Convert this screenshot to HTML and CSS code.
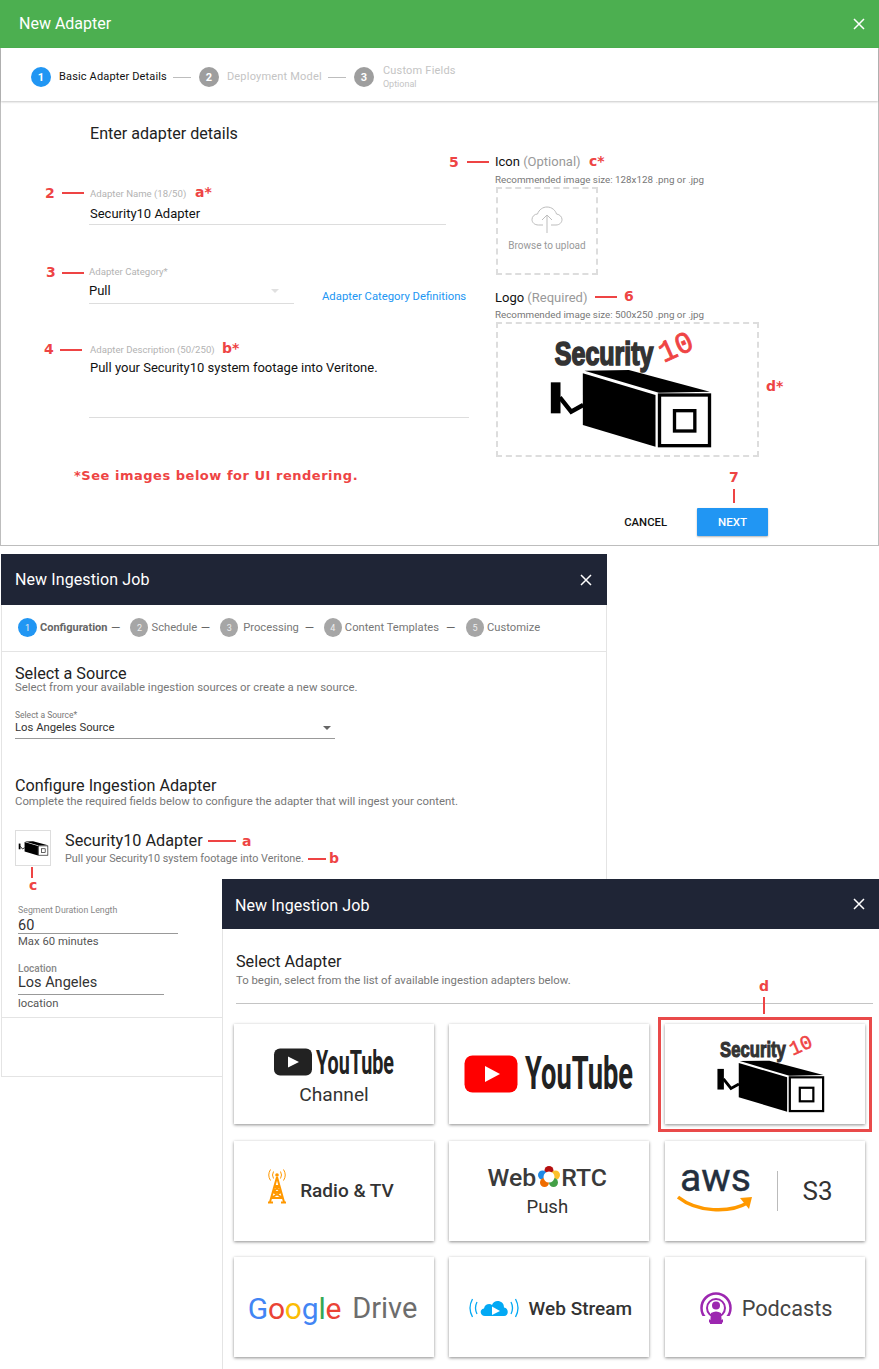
FILE: index.html
```html
<!DOCTYPE html>
<html lang="en">
<head>
<meta charset="utf-8">
<title>Adapter wizard</title>
<link rel="stylesheet" href="styles.css">
</head>
<body>
<svg class="defs" width="0" height="0" aria-hidden="true">
  <symbol id="cam" viewBox="325 685 495 245">
    <rect x="331" y="727" width="29" height="93" fill="#000"/>
    <path d="M358 772 L392 815 L428 795" fill="none" stroke="#000" stroke-width="13"/>
    <path d="M432 692 L565 690 L808 755 L655 758 Z" fill="#000"/>
    <path d="M427 700 L645 765 L645 920 L427 855 Z" fill="#000"/>
    <rect x="657" y="765" width="150" height="152" fill="#fff" stroke="#000" stroke-width="10"/>
    <rect x="702" y="812" width="61" height="61" fill="#fff" stroke="#000" stroke-width="10"/>
  </symbol>
</svg>

<section class="panel p1">
  <header class="bar bar-green">
    <span class="bar-title">New Adapter</span>
    <svg class="x" viewBox="0 0 12 12"><path d="M1 1 L11 11 M11 1 L1 11"/></svg>
  </header>
  <div class="p1-frame">
    <nav class="steps1">
      <span class="dot dot-on">1</span><span class="s1-label s1-active">Basic Adapter Details</span><span class="s1-line"></span>
      <span class="dot">2</span><span class="s1-label">Deployment Model</span><span class="s1-line"></span>
      <span class="dot">3</span><span class="s1-stack"><span class="s1-label s1-flat">Custom Fields</span><small>Optional</small></span>
    </nav>
    <div class="p1-main">
      <div class="p1-left">
        <h2 class="p1-head">Enter adapter details</h2>
        <div class="f-label f1">Adapter Name (18/50)</div>
        <div class="f-value fv1">Security10 Adapter</div>
        <div class="f-label f2">Adapter Category*</div>
        <div class="cat-row">
          <div class="f-value fv2"><span>Pull</span><i class="caret caret-light"></i></div>
          <a class="cat-link">Adapter Category Definitions</a>
        </div>
        <div class="f-label f3">Adapter Description (50/250)</div>
        <div class="f-value fv3">Pull your Security10 system footage into Veritone.</div>
      </div>
      <div class="p1-right">
        <div class="up-title">Icon <span>(Optional)</span></div>
        <div class="up-hint">Recommended image size: 128x128 .png or .jpg</div>
        <div class="drop drop-icon">
          <svg class="cloud" viewBox="0 0 32 27"><path d="M12 19 H7.5 C3.5 19 1 16.5 1 13.5 C1 10.5 3.5 8 6.5 8 C8 3.5 12 1 16 1 C21 1 24.5 4.5 25.5 8 C29 8.5 31 11 31 13.5 C31 16.5 28.5 19 25 19 H20 M16 27 V9 M11 14 L16 9 L21 14"/></svg>
          <span>Browse to upload</span>
        </div>
        <div class="up-title up-logo">Logo <span>(Required)</span></div>
        <div class="up-hint up-hint2">Recommended image size: 500x250 .png or .jpg</div>
        <div class="drop drop-logo">
          <svg class="sec-big" viewBox="320 570 500 360">
            <text x="343" y="675" class="sec-word" textLength="296" lengthAdjust="spacingAndGlyphs">Security</text>
            <text x="0" y="0" class="sec-ten" transform="translate(670 668) rotate(-24)" textLength="104" lengthAdjust="spacingAndGlyphs">10</text>
            <use href="#cam" x="325" y="685" width="495" height="245"/>
          </svg>
        </div>
      </div>
    </div>
    <div class="p1-actions">
      <span class="cancel">CANCEL</span>
      <span class="next">NEXT</span>
    </div>
  </div>
</section>

<section class="panel p2">
  <header class="bar bar-dark bar-p2">
    <span class="bar-title">New Ingestion Job</span>
    <svg class="x" viewBox="0 0 12 12"><path d="M1 1 L11 11 M11 1 L1 11"/></svg>
  </header>
  <div class="p2-frame">
    <nav class="steps2">
      <span class="dot2 dot2-on">1</span><b class="s2-label s2-strong">Configuration</b><span class="s2-dash">—</span>
      <span class="dot2">2</span><span class="s2-label">Schedule</span><span class="s2-dash">—</span>
      <span class="dot2">3</span><span class="s2-label s2-wide">Processing</span><span class="s2-dash s2-dash-far">—</span>
      <span class="dot2">4</span><span class="s2-label">Content Templates</span><span class="s2-dash s2-dash-last">—</span>
      <span class="dot2">5</span><span class="s2-label">Customize</span>
    </nav>
    <div class="p2-body">
      <h3 class="h3">Select a Source</h3>
      <p class="sub sub-tight">Select from your available ingestion sources or create a new source.</p>
      <div class="src-label">Select a Source*</div>
      <div class="src-value"><span>Los Angeles Source</span><i class="caret caret-dark"></i></div>
      <h3 class="h3 h3-conf">Configure Ingestion Adapter</h3>
      <p class="sub">Complete the required fields below to configure the adapter that will ingest your content.</p>
      <div class="ad-row">
        <div class="ad-icon"><svg class="cam-small"><use href="#cam"/></svg></div>
        <div>
          <div class="ad-name">Security10 Adapter</div>
          <div class="sub ad-sub">Pull your Security10 system footage into Veritone.</div>
        </div>
      </div>
      <div class="fields">
        <div class="fd-label">Segment Duration Length</div>
        <div class="fd-value fd-short">60</div>
        <div class="fd-help">Max 60 minutes</div>
        <div class="fd-label fd-loc">Location</div>
        <div class="fd-value fd-city">Los Angeles</div>
        <div class="fd-help fd-help2">location</div>
      </div>
    </div>
    <div class="p2-rule"></div>
  </div>
</section>

<section class="panel p3">
  <header class="bar bar-dark bar-p3">
    <span class="bar-title">New Ingestion Job</span>
    <svg class="x" viewBox="0 0 12 12"><path d="M1 1 L11 11 M11 1 L1 11"/></svg>
  </header>
  <div class="p3-body">
    <h3 class="h3">Select Adapter</h3>
    <p class="sub p3-sub">To begin, select from the list of available ingestion adapters below.</p>
    <hr class="p3-hr">
    <div class="cards">
      <div class="card card-col card-channel">
        <svg class="yt1" viewBox="0 0 122 28">
          <rect x="1" y="0.5" width="38" height="27" rx="6" fill="#222"/>
          <path d="M15 8.5 L26 14 L15 19.5 Z" fill="#fff"/>
          <text x="43" y="26" class="yt-word" textLength="78" lengthAdjust="spacingAndGlyphs">YouTube</text>
        </svg>
        <span class="card-text-channel">Channel</span>
      </div>
      <div class="card">
        <svg class="yt2" viewBox="0 0 170 38">
          <rect x="0.5" y="0.5" width="53" height="37" rx="8" fill="#f00"/>
          <path d="M21 11 L36 19 L21 27 Z" fill="#fff"/>
          <text x="61" y="34" class="yt-word yt-word2" textLength="108" lengthAdjust="spacingAndGlyphs">YouTube</text>
        </svg>
      </div>
      <div class="card">
        <svg class="sec-card" viewBox="320 570 500 360">
          <text x="343" y="675" class="sec-word" textLength="296" lengthAdjust="spacingAndGlyphs">Security</text>
          <text x="0" y="0" class="sec-ten" transform="translate(670 668) rotate(-24)" textLength="104" lengthAdjust="spacingAndGlyphs">10</text>
          <use href="#cam" x="325" y="685" width="495" height="245"/>
        </svg>
      </div>

      <div class="card card-radio">
        <svg class="tower" viewBox="0 0 20 36">
          <path d="M10 9 L3 34 M10 9 L17 34 M7.6 18 H12.4 M6 24 H14 M4 30 H16 M7.6 18 L14 24 M12.4 18 L6 24 M6 24 L16 30 M14 24 L4 30 M1 34.500 H6 M14 34.500 H19" fill="none" stroke="#ff9800" stroke-width="2"/>
          <circle cx="10" cy="7" r="1.800" fill="#ff9800"/>
          <path d="M6.500 3.500 Q4.500 7 6.500 10.500 M13.500 3.500 Q15.500 7 13.500 10.500 M3.500 1.500 Q0 7 3.500 12.500 M16.500 1.500 Q20 7 16.500 12.500" fill="none" stroke="#ff9800" stroke-width="1"/>
        </svg>
        <span class="card-text-radio">Radio &amp; TV</span>
      </div>
      <div class="card card-col card-webrtc">
        <div class="webrtc">
          <span>Web</span>
          <svg class="rtc-ring" viewBox="0 0 22 22">
            <circle cx="11" cy="4.500" r="4.500" fill="#b50f0f"/>
            <circle cx="4.500" cy="9" r="4.500" fill="#1e88e5"/>
            <circle cx="17.500" cy="9" r="4.500" fill="#fbc02d"/>
            <circle cx="6.500" cy="16.500" r="4.500" fill="#ef6c00"/>
            <circle cx="15.500" cy="16.500" r="4.500" fill="#43a047"/>
            <circle cx="11" cy="11" r="5.500" fill="#fff"/>
          </svg>
          <span>RTC</span>
        </div>
        <span class="card-text-push">Push</span>
      </div>
      <div class="card card-aws">
        <svg class="aws" viewBox="0 0 78 47">
          <text x="3" y="24" class="aws-word" textLength="71" lengthAdjust="spacingAndGlyphs">aws</text>
          <path d="M1 30 C20 45 52 47 72 35" fill="none" stroke="#f90" stroke-width="3.500"/>
          <path d="M63 31 L75 30 L72 42 Z" fill="#f90"/>
        </svg>
        <span class="aws-div"></span>
        <span class="card-text-s3">S3</span>
      </div>

      <div class="card card-low card-google">
        <span class="gd"><span class="g-b">G</span><span class="g-r">o</span><span class="g-y">o</span><span class="g-b">g</span><span class="g-g">l</span><span class="g-r">e</span></span><span class="gd-drive">Drive</span>
      </div>
      <div class="card card-low">
        <svg class="stream" viewBox="0 0 54 22">
          <path d="M10 17 Q7 11 10 5 M5.500 20 Q0.500 11 5.500 2 M44 17 Q47 11 44 5 M48.500 20 Q53.500 11 48.500 2" fill="none" stroke="#03a9f4" stroke-width="1.300"/>
          <path d="M18 19 C13 19 12 12 17 11.500 C17.500 7 23 6 25 8 C27 2 37 3 37 10.500 C42 11 42 19 37 19 Z" fill="#03a9f4"/>
          <path d="M25 9.500 L33 14 L25 18 Z" fill="#fff"/>
        </svg>
        <span class="card-text-stream">Web Stream</span>
      </div>
      <div class="card card-low card-podcasts">
        <svg class="pod" viewBox="0 0 32 32">
          <circle cx="16" cy="16" r="14.500" fill="none" stroke="#9c27b0" stroke-width="2.500"/>
          <circle cx="16" cy="16" r="9" fill="none" stroke="#9c27b0" stroke-width="2"/>
          <rect x="0" y="24" width="9" height="8" fill="#fff"/>
          <rect x="23" y="24" width="9" height="8" fill="#fff"/>
          <circle cx="16" cy="13.500" r="4" fill="#9c27b0"/>
          <path d="M10 32 L11 21 Q16 18 21 21 L22 32 Z" fill="#9c27b0"/>
        </svg>
        <span class="card-text-pod">Podcasts</span>
      </div>
    </div>
  </div>
</section>

<div class="red-box"></div>

<span class="n n-2">2</span><i class="dash d-2"></i><span class="n n-astar-a">a*</span>
<span class="n n-3">3</span><i class="dash d-3"></i>
<span class="n n-4">4</span><i class="dash d-4"></i><span class="n n-astar-b">b*</span>
<span class="n n-5">5</span><i class="dash d-5"></i><span class="n n-astar-c">c*</span>
<i class="dash d-6"></i><span class="n n-6">6</span>
<span class="n n-astar-d">d*</span>
<span class="n n-7">7</span><i class="vdash v-7"></i>
<div class="see-note">*See images below for UI rendering.</div>
<i class="dash d-a"></i><span class="n n-a">a</span>
<i class="dash d-b"></i><span class="n n-b">b</span>
<i class="vdash v-c"></i><span class="n n-c">c</span>
<span class="n n-d">d</span><i class="vdash v-d"></i>
</body>
</html>
```
FILE: styles.css
```css
* { box-sizing: border-box; }
html, body { margin: 0; padding: 0; background: #fff; }
body {
  position: relative;
  width: 879px;
  height: 1369px;
  overflow: hidden;
  font-family: Roboto, "Liberation Sans", sans-serif;
  color: #222;
}
.defs { position: absolute; }
.panel { position: absolute; background: #fff; display: flex; flex-direction: column; }
.p1 { left: 0; top: 0; width: 879px; height: 546px; }
.p2 { left: 1px; top: 554px; width: 606px; height: 523px; }
.p3 { left: 222px; top: 879px; width: 657px; height: 490px; }

.bar { display: flex; align-items: center; justify-content: space-between; color: #fff; flex: none; }
.bar-green { height: 48px; background: #4caf50; padding: 0 14px 0 19px; }
.bar-dark { background: #1f2536; }
.bar-dark .bar-title { letter-spacing: .1px; }
.bar-p2 { height: 51px; padding: 0 15px 0 14px; }
.bar-p3 { height: 50px; padding: 0 14px 0 13px; }
.bar-p3 .bar-title { margin-top: 4px; }
.bar-title { font-size: 16px; line-height: 20px; }
.x { width: 12px; height: 12px; fill: none; stroke: #fff; stroke-width: 1.500; }

/* panel 1 */
.p1-frame { flex: 1; display: flex; flex-direction: column; border: 1px solid #bdbdbd; border-top: 0; min-height: 0; }
.steps1 { height: 53px; flex: none; display: flex; align-items: center; padding: 5px 0 0 30px; box-shadow: 0 1px 2px rgba(0,0,0,.22); }
.dot { width: 20px; height: 20px; border-radius: 50%; background: #9e9e9e; color: #fff; font-size: 11px; font-weight: 700; display: flex; align-items: center; justify-content: center; flex: none; }
.dot-on { background: #2196f3; }
.s1-label { font-size: 11px; line-height: 14px; margin-left: 8px; color: #c4c4c4; white-space: nowrap; letter-spacing: .2px; }
.s1-active { color: #111; letter-spacing: .15px; }
.s1-line { width: 18px; height: 1px; background: #bdbdbd; margin: 0 8px 0 6px; flex: none; }
.s1-stack { display: flex; flex-direction: column; margin-left: 9px; margin-top: -1px; }
.s1-flat { margin-left: 0; }
.s1-stack small { font-size: 9px; line-height: 12px; color: #c4c4c4; }

.p1-main { flex: 1; display: flex; padding: 23px 0 0 88px; min-height: 0; }
.p1-left { width: 380px; flex: none; }
.p1-head { margin: 0 0 0 1px; font-size: 16.100px; line-height: 19px; font-weight: 400; color: #222; }
.f-label { font-size: 9.600px; line-height: 12px; color: #b3b3b3; }
.f1 { margin: 45px 0 0 1px; }
.f2 { margin-top: 41px; }
.f3 { margin: 39px 0 0 1px; }
.f-value { font-size: 13px; line-height: 16px; color: #111; }
.fv1 { margin-top: 6px; width: 357px; padding: 0 0 2px 1px; border-bottom: 1px solid #ddd; }
.cat-row { display: flex; align-items: flex-start; margin-top: 5px; }
.fv2 { width: 205px; height: 21px; display: flex; justify-content: space-between; align-items: center; padding: 0 15px 5px 0; border-bottom: 1px solid #ddd; flex: none; }
.cat-link { margin: 6px 0 0 28px; font-size: 11.300px; line-height: 16px; color: #2196f3; white-space: nowrap; }
.fv3 { margin-top: 4px; padding: 0 0 0 1px; height: 58px; border-bottom: 1px solid #ddd; width: 380px; font-size: 13px; }
.caret { display: block; width: 0; height: 0; border-left: 4.500px solid transparent; border-right: 4.500px solid transparent; }
.caret-light { border-top: 4.500px solid #e0e0e0; }
.caret-dark { border-top: 4.500px solid #666; }

.p1-right { margin: 29px 0 0 26px; flex: none; }
.up-title { font-size: 13px; height: 16px; line-height: 18px; color: #111; }
.up-title span { color: #999; }
.up-logo { margin-top: 14px; }
.up-hint { margin-top: 4px; font-size: 9.800px; height: 12px; line-height: 14px; color: #777; white-space: nowrap; }
.up-hint2 { margin-top: 3px; }
.drop { border: 2px dashed #ddd; margin: 2px 0 0 1px; display: flex; flex-direction: column; align-items: center; }
.drop-icon { width: 102px; height: 88px; padding-top: 17px; }
.drop-icon span { font-size: 10px; line-height: 12px; margin-top: 7px; color: #999; white-space: nowrap; }
.cloud { width: 32px; height: 27px; fill: none; stroke: #bdbdbd; stroke-width: 1; }
.drop-logo { width: 263px; height: 135px; justify-content: center; }
.sec-big { width: 167px; height: 120px; margin-left: 5px; }
.sec-word { font-family: "Liberation Sans", sans-serif; font-weight: 700; font-size: 98px; fill: #333; stroke: #333; stroke-width: 5px; }
.sec-ten { font-family: "Liberation Mono", monospace; font-size: 90px; fill: #ef4444; stroke: #ef4444; stroke-width: 2.500px; }
.p1-actions { flex: none; display: flex; justify-content: flex-end; align-items: center; padding-right: 110px; margin-bottom: 9px; }
.cancel { font-size: 11.300px; font-weight: 500; color: #111; margin-right: 30px; }
.next { width: 71px; height: 28px; background: #2196f3; color: #fff; font-size: 11.500px; font-weight: 500; display: flex; align-items: center; justify-content: center; border-radius: 1px; box-shadow: 0 1px 2px rgba(0,0,0,.3); }

/* panel 2 */
.p2-frame { flex: 1; display: flex; flex-direction: column; border: 1px solid #e4e4e4; border-top: 0; min-height: 0; }
.steps2 { height: 47px; flex: none; display: flex; align-items: center; padding: 0 0 1px 16px; border-bottom: 1px solid #e4e4e4; font-size: 11.200px; color: #777; white-space: nowrap; }
.dot2 { width: 18px; height: 19px; border-radius: 50%; background: #a6a6a6; color: #eee; font-size: 9px; display: flex; align-items: center; justify-content: center; flex: none; }
.dot2-on { width: 19px; background: #2196f3; }
.s2-label { margin-left: 3px; }
.s2-wide { margin-left: 5px; }
.s2-strong { font-weight: 700; font-size: 11px; color: #666; }
.s2-dash { width: 10px; margin: 0 9.500px 0 3.500px; font-size: 12px; color: #666; flex: none; }
.s2-dash-far { margin: 0 9px 0 6px; }
.s2-dash-last { margin: 0 10px 0 7px; }
.p2-body { padding: 12px 0 0 13px; flex: none; }
.h3 { margin: 0; font-size: 16.200px; line-height: 19px; font-weight: 400; color: #222; white-space: nowrap; }
.sub { margin: 0; font-size: 11.350px; line-height: 13px; color: #777; white-space: nowrap; }
.sub-tight { margin-top: -2px; }
.src-label { margin-top: 16px; font-size: 8.500px; line-height: 10px; color: #777; }
.src-value { margin-top: 1px; width: 320px; height: 18px; padding: 0 4px 4px 0; border-bottom: 1px solid #999; font-size: 11.300px; line-height: 13px; color: #333; display: flex; justify-content: space-between; align-items: center; }
.h3-conf { margin-top: 37px; }
.ad-row { display: flex; gap: 14px; margin-top: 22px; }
.ad-icon { width: 36px; height: 36px; border: 1px solid #ddd; display: flex; align-items: center; justify-content: center; flex: none; }
.cam-small { width: 31px; height: 15px; }
.ad-name { font-size: 16.250px; height: 19px; line-height: 21px; color: #222; white-space: nowrap; }
.ad-sub { margin-top: 2px; font-size: 10.800px; height: 13px; line-height: 15px; }
.fields { margin: 39px 0 0 3px; }
.fd-label { font-size: 8.800px; line-height: 10px; color: #888; }
.fd-value { font-size: 14.500px; line-height: 18px; color: #333; border-bottom: 1px solid #999; margin-top: 2px; }
.fd-short { width: 160px; height: 17px; }
.fd-city { width: 146px; height: 21px; margin-top: -1px; }
.fd-help { margin-top: 2px; font-size: 11.300px; line-height: 12px; color: #555; }
.fd-help2 { margin-top: 3px; }
.fd-loc { margin-top: 15px; font-size: 10px; line-height: 12px; font-weight: 500; }
.p2-rule { margin-top: 7px; border-top: 1px solid #e4e4e4; }

/* panel 3 */
.p3-body { flex: 1; border-left: 1px solid #e4e4e4; padding: 23px 6px 0 13px; }
.p3-sub { margin-top: 3px; }
.p3-hr { margin: 16px 0 0; border: 0; border-top: 1px solid #c4c4c4; }
.cards { margin: 20px 0 0 -2px; width: 631px; display: grid; grid-template-columns: repeat(3, 200px); grid-auto-rows: 100px; column-gap: 15.300px; row-gap: 16.500px; }
.card { background: #fff; box-shadow: 0 1px 3px rgba(0,0,0,.45); display: flex; align-items: center; justify-content: center; color: #333; white-space: nowrap; }
.card-col { flex-direction: column; }
.card-channel { padding-top: 6px; }
.card-radio { padding-right: 7px; }
.card-webrtc { padding: 2px 4px 0 0; }
.card-low { padding-top: 2px; }
.card-google { padding-right: 3px; }
.card-podcasts { padding-left: 3px; }
.yt1 { width: 122px; height: 28px; }
.yt2 { width: 170px; height: 38px; }
.yt-word { font-family: Roboto, sans-serif; font-weight: 700; font-size: 34px; fill: #222; }
.yt-word2 { font-size: 46px; }
.card-text-channel { font-size: 19.200px; line-height: 22px; margin-top: 8px; color: #333; }
.sec-card { width: 111px; height: 80px; margin-left: 11px; }
.tower { width: 20px; height: 36px; margin: -10px 13px 0 0; }
.card-text-radio { font-size: 19px; font-weight: 500; }
.webrtc { display: flex; align-items: center; font-size: 24.800px; line-height: 26px; font-weight: 500; color: #3a3a3a; }
.rtc-ring { width: 22px; height: 22px; margin: 0 1px 2px 2px; }
.card-text-push { font-size: 18.500px; line-height: 22px; margin-top: 5px; }
.card-aws { justify-content: flex-start; padding-left: 12px; }
.aws { width: 78px; height: 47px; }
.aws-word { font-family: Roboto, sans-serif; font-weight: 400; font-size: 39px; fill: #232f3e; stroke: #232f3e; stroke-width: .4px; }
.aws-div { width: 1px; height: 40px; background: #bbb; margin-left: 22px; }
.card-text-s3 { font-size: 26px; margin-left: 25px; color: #333; }
.gd { font-size: 30px; letter-spacing: -.2px; }
.gd-drive { font-size: 29px; color: #6d6d6d; margin-left: 11px; }
.g-b { color: #4285f4; }
.g-r { color: #ea4335; }
.g-y { color: #fbbc05; }
.g-g { color: #34a853; }
.stream { width: 54px; height: 22px; margin-right: 8px; }
.card-text-stream { font-size: 19px; font-weight: 500; color: #333; }
.pod { width: 32px; height: 32px; margin-right: 10px; }
.card-text-pod { font-size: 21.700px; color: #444; }

/* annotations */
.red-box { position: absolute; left: 658px; top: 1017px; width: 214px; height: 115px; border: 3px solid #e94a4a; }
.n { position: absolute; font-family: "DejaVu Sans", sans-serif; font-weight: 700; font-size: 14px; line-height: 16px; color: #ee4444; }
.dash { position: absolute; height: 2px; width: 22px; background: #ee4444; display: block; }
.vdash { position: absolute; width: 2px; background: #ee4444; display: block; }
.n-2 { left: 45px; top: 185px; }
.d-2 { left: 62px; top: 192px; }
.n-astar-a { left: 195px; top: 184px; }
.n-3 { left: 46px; top: 264px; }
.d-3 { left: 62px; top: 272px; }
.n-4 { left: 44px; top: 341px; }
.d-4 { left: 60px; top: 349px; }
.n-astar-b { left: 222px; top: 340px; }
.n-5 { left: 449px; top: 154px; }
.d-5 { left: 467px; top: 161px; }
.n-astar-c { left: 589px; top: 153px; }
.d-6 { left: 595px; top: 296px; }
.n-6 { left: 624px; top: 288px; }
.n-astar-d { left: 766px; top: 378px; }
.n-7 { left: 729px; top: 469px; }
.v-7 { left: 733px; top: 489px; height: 14px; }
.see-note { position: absolute; left: 74px; top: 467px; font-family: "DejaVu Sans", sans-serif; font-weight: 700; font-size: 13px; line-height: 18px; letter-spacing: .52px; color: #ee4444; white-space: nowrap; }
.d-a { left: 208px; top: 840px; width: 28px; }
.n-a { left: 242px; top: 833px; }
.d-b { left: 308px; top: 858px; width: 18px; }
.n-b { left: 329px; top: 850px; }
.v-c { left: 31px; top: 867px; height: 11px; }
.n-c { left: 29px; top: 877px; }
.n-d { left: 759px; top: 978px; }
.v-d { left: 763px; top: 997px; height: 17px; }
```
